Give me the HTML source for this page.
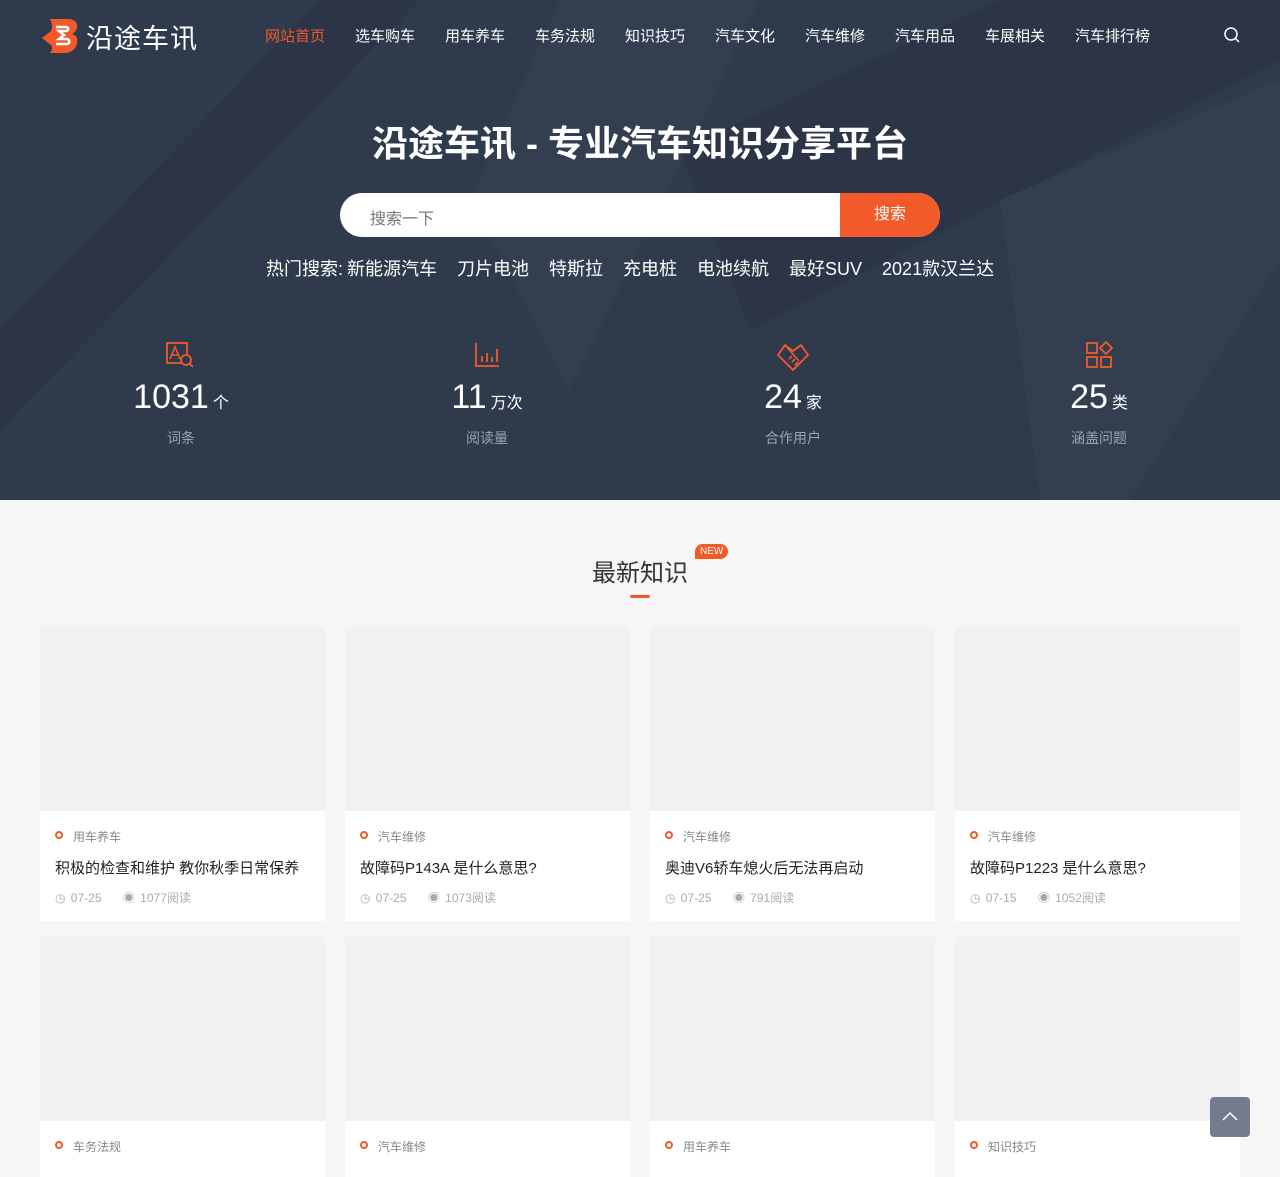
<!DOCTYPE html>
<html><head><meta charset="utf-8">
<style>
*{margin:0;padding:0;box-sizing:border-box}
body{width:1280px;height:1167px;overflow:hidden;background:#f6f6f6;font-family:"Liberation Sans","Noto Sans CJK SC",sans-serif;position:relative}
.hero{position:absolute;left:0;top:0;width:1280px;height:500px;background:#2f3a4d;overflow:hidden}
.nav{position:absolute;top:0;left:0;width:1280px;height:70px}
.nav a{position:absolute;top:25px;font-size:15px;color:#fff;text-decoration:none}
.logo{position:absolute;left:40px;top:16px;display:flex;align-items:center}
.logo span{color:#fff;font-size:27px;margin-left:6px;letter-spacing:1px}
h1{position:absolute;top:115px;width:100%;text-align:center;color:#fff;font-size:36px;font-weight:bold}
.sbox{position:absolute;left:340px;top:193px;width:600px;height:44px;background:#fff;border-radius:22px;overflow:hidden}
.sbox .ph{position:absolute;left:30px;top:12px;font-size:16px;color:#777}
.sbox .btn{position:absolute;right:0;top:0;width:100px;height:44px;background:#f25a2a;color:#fff;font-size:16px;text-align:center;line-height:44px}
.hot{position:absolute;top:255px;left:266px;color:#fff;font-size:18px;white-space:nowrap}
.hot span{margin-right:20px}
.stat{position:absolute;top:340px;width:200px;text-align:center;color:#fff}
.stat .n{font-size:34px;margin-top:2px;line-height:40px}
.stat .n small{font-size:16px;margin-left:4px}
.stat .l{font-size:14px;color:#9aa3b3;margin-top:4px}
.title{position:absolute;top:553px;left:592px;font-size:24px;color:#333}
.new{position:absolute;left:695px;top:544px;background:#f25a2a;color:#fff;font-size:10px;padding:2px 5px;border-radius:8px 8px 8px 0}
.bar{position:absolute;left:630px;top:595px;width:20px;height:3px;background:#f25a2a;border-radius:2px}
.card{position:absolute;width:285px;background:#fff}
.card .img{height:184px;background:#f1f1f1}
.cat{position:absolute;left:15px;font-size:12px;color:#888;padding-left:18px}
.cat:before{content:"";position:absolute;left:0;top:3px;width:8px;height:8px;border:2px solid #f25a2a;border-radius:50%;box-sizing:border-box}
.ct{position:absolute;left:15px;top:46px;font-size:15px;color:#222}
.meta{position:absolute;left:15px;font-size:12px;color:#aaa;word-spacing:2px}
.top{position:absolute;left:1210px;top:1097px;width:40px;height:40px;background:#737b8d;border-radius:4px}
</style></head><body>
<div class="hero">
<svg width="1280" height="500" style="position:absolute;left:0;top:0">
<polygon points="0,330 320,0 420,0 0,430" fill="#2b3547"/>
<polygon points="560,0 760,0 570,390 470,200" fill="#333e51"/>
<polygon points="680,150 1000,0 1280,0 1280,60 750,330" fill="#2b3547"/>
<polygon points="1000,200 1280,80 1280,260 1130,500 1040,500" fill="#333e51"/>
</svg>
<div class="nav">
<div class="logo"><svg width="40" height="40" viewBox="0 0 40 40"><path d="M10 3h18c7 0 10 4 9 9-1 3-3 5-5 6 4 1 6 4 5 9-1 6-6 10-12 10H10c2-3 3-5 1-8l-9-7 9-7c2-3 1-8-1-12z" fill="#f25a2a"/><path d="M16 11h10c3 0 3 4 0 4h-7l5 4-5 4h8c3 0 3 5 0 5H16" fill="none" stroke="#fff" stroke-width="2.5"/></svg><span>沿途车讯</span></div>
<a style="left:265px;color:#f25a2a">网站首页</a>
<a style="left:355px">选车购车</a>
<a style="left:445px">用车养车</a>
<a style="left:535px">车务法规</a>
<a style="left:625px">知识技巧</a>
<a style="left:715px">汽车文化</a>
<a style="left:805px">汽车维修</a>
<a style="left:895px">汽车用品</a>
<a style="left:985px">车展相关</a>
<a style="left:1075px">汽车排行榜</a>
<svg style="position:absolute;left:1223px;top:26px" width="18" height="18" viewBox="0 0 18 18"><circle cx="8" cy="8" r="6" fill="none" stroke="#fff" stroke-width="1.5"/><path d="M12.5 12.5L16 16" stroke="#fff" stroke-width="1.5"/></svg>
</div>
<h1>沿途车讯 - 专业汽车知识分享平台</h1>
<div class="sbox"><div class="ph">搜索一下</div><div class="btn">搜索</div></div>
<div class="hot"><span style="margin-right:4px">热门搜索:</span><span>新能源汽车</span><span>刀片电池</span><span>特斯拉</span><span>充电桩</span><span>电池续航</span><span>最好SUV</span><span>2021款汉兰达</span></div>
<div class="stat" style="left:81px"><svg width="32" height="30" viewBox="0 0 32 30"><rect x="2" y="3" width="20" height="20" fill="none" stroke="#f25a2a" stroke-width="1.8"/><path d="M5 19l5-12 5 12M7 15h6" fill="none" stroke="#f25a2a" stroke-width="1.6"/><circle cx="21" cy="20" r="5" fill="#2f3a4d" stroke="#f25a2a" stroke-width="1.8"/><path d="M24 23l4 4" stroke="#f25a2a" stroke-width="1.8"/></svg><div class="n">1031<small>个</small></div><div class="l">词条</div></div>
<div class="stat" style="left:387px"><svg width="30" height="30" viewBox="0 0 30 30"><path d="M4 3v23h23M10 22v-6M15 22v-9M20 22v-5M25 22v-13" fill="none" stroke="#f25a2a" stroke-width="1.8"/></svg><div class="n">11<small>万次</small></div><div class="l">阅读量</div></div>
<div class="stat" style="left:693px"><svg width="36" height="32" viewBox="0 0 36 32"><path d="M18 30L3 15 10 5l8 6 8-6 7 10z" fill="none" stroke="#f25a2a" stroke-width="1.8"/><path d="M10 5l14 16M14 19l3-3M17 22l3-3M20 25l3-3" stroke="#f25a2a" stroke-width="1.6"/></svg><div class="n" style="margin-top:0">24<small>家</small></div><div class="l">合作用户</div></div>
<div class="stat" style="left:999px"><svg width="30" height="30" viewBox="0 0 30 30"><rect x="3" y="3" width="10" height="10" fill="none" stroke="#f25a2a" stroke-width="1.8"/><path d="M22 2l6 6-6 6-6-6z" fill="none" stroke="#f25a2a" stroke-width="1.8"/><rect x="3" y="17" width="10" height="10" fill="none" stroke="#f25a2a" stroke-width="1.8"/><rect x="17" y="17" width="10" height="10" fill="none" stroke="#f25a2a" stroke-width="1.8"/></svg><div class="n">25<small>类</small></div><div class="l">涵盖问题</div></div>
</div>
<div class="title">最新知识</div><div class="new">NEW</div><div class="bar"></div>

<div class="card" style="left:40px;top:627px;height:294px"><div class="img"></div><div class="cat" style="top:201px">用车养车</div><div class="ct" style="top:230px">积极的检查和维护 教你秋季日常保养</div><div class="meta" style="top:262px">◷ 07-25 &nbsp;&nbsp; ◉ 1077阅读</div></div>
<div class="card" style="left:345px;top:627px;height:294px"><div class="img"></div><div class="cat" style="top:201px">汽车维修</div><div class="ct" style="top:230px">故障码P143A 是什么意思?</div><div class="meta" style="top:262px">◷ 07-25 &nbsp;&nbsp; ◉ 1073阅读</div></div>
<div class="card" style="left:650px;top:627px;height:294px"><div class="img"></div><div class="cat" style="top:201px">汽车维修</div><div class="ct" style="top:230px">奥迪V6轿车熄火后无法再启动</div><div class="meta" style="top:262px">◷ 07-25 &nbsp;&nbsp; ◉ 791阅读</div></div>
<div class="card" style="left:955px;top:627px;height:294px"><div class="img"></div><div class="cat" style="top:201px">汽车维修</div><div class="ct" style="top:230px">故障码P1223 是什么意思?</div><div class="meta" style="top:262px">◷ 07-15 &nbsp;&nbsp; ◉ 1052阅读</div></div>

<div class="card" style="left:40px;top:937px;height:240px"><div class="img"></div><div class="cat" style="top:201px">车务法规</div></div>
<div class="card" style="left:345px;top:937px;height:240px"><div class="img"></div><div class="cat" style="top:201px">汽车维修</div></div>
<div class="card" style="left:650px;top:937px;height:240px"><div class="img"></div><div class="cat" style="top:201px">用车养车</div></div>
<div class="card" style="left:955px;top:937px;height:240px"><div class="img"></div><div class="cat" style="top:201px">知识技巧</div></div>
<div class="top"><svg width="40" height="40" viewBox="0 0 40 40"><path d="M13 23l7-7 7 7" fill="none" stroke="#fff" stroke-width="1.5"/></svg></div>
</body></html>
